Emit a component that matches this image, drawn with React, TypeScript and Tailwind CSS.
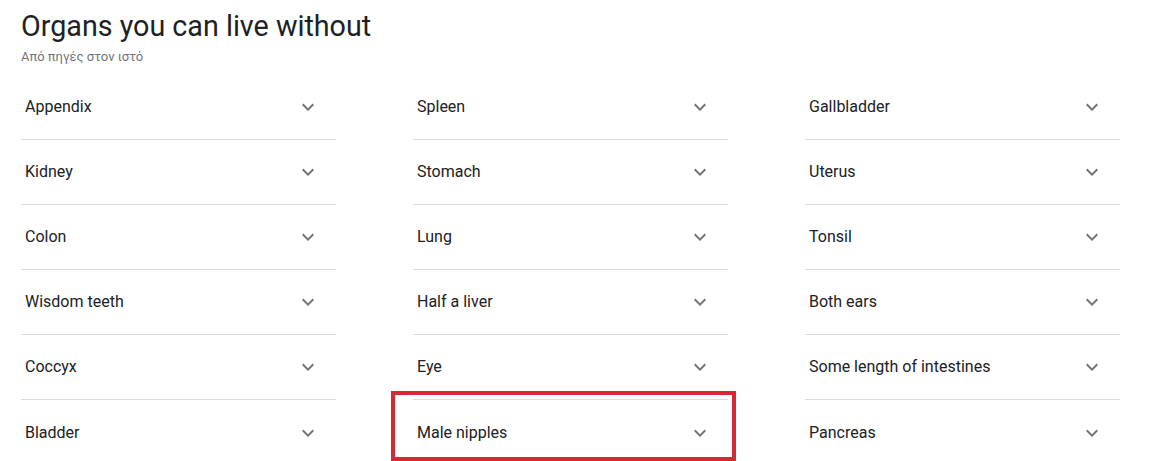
import React from "react";

const cols = [
  ["Appendix", "Kidney", "Colon", "Wisdom teeth", "Coccyx", "Bladder"],
  ["Spleen", "Stomach", "Lung", "Half a liver", "Eye", "Male nipples"],
  ["Gallbladder", "Uterus", "Tonsil", "Both ears", "Some length of intestines", "Pancreas"],
];

function Chevron() {
  return (
    <svg width="24" height="24" viewBox="0 0 24 24" className="text-[#70757a]">
      <path fill="currentColor" d="M16.59 8.59 12 13.17 7.41 8.59 6 10l6 6 6-6z" />
    </svg>
  );
}

export default function App() {
  return (
    <div className="relative w-[1155px] h-[461px] bg-white overflow-hidden" style={{ fontFamily: "Roboto, 'Noto Sans', Arial, sans-serif" }}>
      <div className="pl-[21px] pt-[8px]">
        <h1 className="text-[28.7px] leading-[36px] text-[#202124]">Organs you can live without</h1>
        <div className="text-[13px] leading-[20px] text-[#70757a] mt-[3px]">Από πηγές στον ιστό</div>
        <div className="flex gap-[77px] mt-[8px]">
          {cols.map((col, ci) => (
            <div key={ci} className="w-[315px] flex flex-col">
              {col.map((item, i) => (
                <div
                  key={item}
                  className={`h-[65px] flex items-center justify-between pl-[4px] pr-[16px] ${i < col.length - 1 ? "border-b border-[#dadce0]" : ""}`}
                >
                  <span className="text-[16px] text-[#202124]">{item}</span>
                  <Chevron />
                </div>
              ))}
            </div>
          ))}
        </div>
      </div>
      <div className="absolute left-[391px] top-[391px] w-[345px] h-[70px] border-[4px] border-[#d42a35]" />
    </div>
  );
}
